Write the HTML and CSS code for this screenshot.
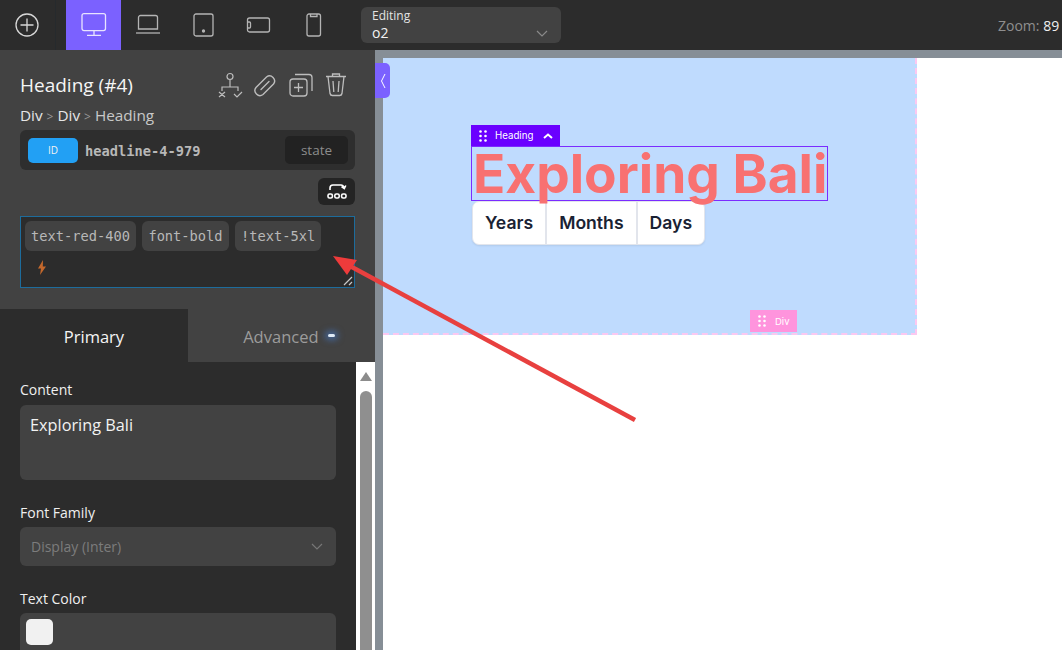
FILE: index.html
```html
<!DOCTYPE html>
<html lang="en">
<head>
    <meta charset="UTF-8">
    <title>Heading editor</title>
    <link rel="stylesheet" href="styles.css">
</head>
<body>
    <div class="topbar">
        <div class="add-btn">
            <svg width="26" height="26" viewBox="0 0 26 26" fill="none" stroke="#d8d8d8" stroke-width="1.3"><circle cx="13" cy="13" r="11"/><path d="M13 6.500v13M6.500 13h13"/></svg>
        </div>
        <div class="device active">
            <svg width="28" height="26" viewBox="0 0 28 26" fill="none" stroke="#e8e4ff" stroke-width="1.3"><rect x="2" y="1.600" width="23.500" height="17" rx="2"/><path d="M14 19v4M7 23.400h14"/></svg>
        </div>
        <div class="device">
            <svg width="28" height="26" viewBox="0 0 28 26" fill="none" stroke="#b4b4b4" stroke-width="1.3"><path d="M3.500 17V5.500a2 2 0 0 1 2-2h15a2 2 0 0 1 2 2V17z"/><path d="M1 21h24"/></svg>
        </div>
        <div class="device">
            <svg width="24" height="26" viewBox="0 0 24 26" fill="none" stroke="#b4b4b4" stroke-width="1.3"><rect x="2" y="2" width="19" height="22" rx="2"/><circle cx="11.500" cy="19" r="1" fill="#b4b4b4"/></svg>
        </div>
        <div class="device">
            <svg width="28" height="26" viewBox="0 0 28 26" fill="none" stroke="#b4b4b4" stroke-width="1.3"><rect x="2.500" y="6" width="22" height="14" rx="2"/><path d="M2.500 10h2a1 1 0 0 1 1 1v4a1 1 0 0 1-1 1h-2"/></svg>
        </div>
        <div class="device">
            <svg width="20" height="26" viewBox="0 0 20 26" fill="none" stroke="#b4b4b4" stroke-width="1.3"><rect x="3" y="2" width="13.500" height="22" rx="2"/><path d="M6.500 2v2.500H13V2"/></svg>
        </div>
        <div class="editing">
            <div class="editing-label">Editing</div>
            <div class="editing-value">o2</div>
            <svg class="editing-caret" width="12" height="7" viewBox="0 0 12 7" fill="none" stroke="#8a8a8a" stroke-width="1.2"><path d="M1 1l5 5 5-5"/></svg>
        </div>
        <div class="zoom"><span class="zoom-label">Zoom:</span> 89</div>
    </div>

    <div class="main">
        <div class="sidebar">
            <div class="panel">
                <div class="title-row">
                    <div class="title">Heading (#4)</div>
                    <div class="title-icons">
                        <svg class="icon-flow" width="26" height="26" viewBox="0 0 26 26" fill="none" stroke="#bdbdbd" stroke-width="1.2"><circle cx="12" cy="4.500" r="3"/><path d="M12 8v7M4 19v-4h16v4M1 20l6 5M7 20l-6 5M16 22l3 3 5-5"/></svg>
                        <svg width="24" height="24" viewBox="0 0 24 24" fill="none" stroke="#bdbdbd" stroke-width="1.4" stroke-linecap="round"><path d="M3 14.500L13.500 4a5 5 0 0 1 7 7L10 21.500a5 5 0 0 1-7-7z"/><path d="M8 16.500L16 8.500"/></svg>
                        <svg width="24" height="24" viewBox="0 0 24 24" fill="none" stroke="#bdbdbd" stroke-width="1.3"><rect x="1" y="6" width="17" height="17" rx="3"/><path d="M6 1.500h14a3 3 0 0 1 3 3V18M9.500 10v9M5 14.500h9"/></svg>
                        <svg width="22" height="24" viewBox="0 0 22 24" fill="none" stroke="#bdbdbd" stroke-width="1.3"><path d="M1 3.500h20M7.500 3.500V1h7v2.500M3 3.500l2 17a2.500 2.500 0 0 0 2.500 2h7a2.500 2.500 0 0 0 2.500-2l2-17M8 8l.8 11M14 8l-.8 11"/></svg>
                    </div>
                </div>
                <div class="crumbs">Div <span class="sep">&gt;</span> Div <span class="sep">&gt;</span> <span class="crumb-last">Heading</span></div>
                <div class="id-row">
                    <div class="id-badge">ID</div>
                    <div class="id-value">headline-4-979</div>
                    <div class="state">state</div>
                </div>
                <div class="swap-row">
                    <div class="swap-btn">
                        <svg width="20" height="17" viewBox="0 0 20 17" fill="none" stroke="#fff" stroke-width="1.6"><path d="M3 7V5a3 3 0 0 1 3-3h8c1.500 0 2.500 1 3 2.500M14.500 3.500l2.800 2 1.500-3"/><rect x="1" y="11" width="4.400" height="4" rx="1.500"/><rect x="7.800" y="11" width="4.400" height="4" rx="1.500"/><rect x="14.600" y="11" width="4.400" height="4" rx="1.500"/></svg>
                    </div>
                </div>
                <div class="class-box">
                    <div class="chips">
                        <span class="chip">text-red-400</span>
                        <span class="chip">font-bold</span>
                        <span class="chip">!text-5xl</span>
                    </div>
                    <svg class="bolt" width="10" height="15" viewBox="0 0 10 15"><path d="M6 0L1 8.500h3L3 15l6-8.500H5.800z" fill="#c4682c"/></svg>
                    <svg class="grip" width="10" height="10" viewBox="0 0 10 10" stroke="#c8c8c8" stroke-width="1.2"><path d="M1 9l8-8M6 9l3-3"/></svg>
                </div>
            </div>

            <div class="tabs">
                <div class="tab tab-on">Primary</div>
                <div class="tab">Advanced <span class="pill"></span></div>
            </div>

            <div class="props">
                <div class="props-body">
                    <label class="prop-label">Content</label>
                    <div class="textarea">Exploring Bali</div>
                    <label class="prop-label">Font Family</label>
                    <div class="select">
                        <span>Display (Inter)</span>
                        <svg width="12" height="7" viewBox="0 0 12 7" fill="none" stroke="#777" stroke-width="1.2"><path d="M1 1l5 5 5-5"/></svg>
                    </div>
                    <label class="prop-label">Text Color</label>
                    <div class="color-field"><span class="swatch"></span></div>
                </div>
                <div class="scrollbar">
                    <div class="scroll-up"></div>
                    <div class="scroll-thumb"></div>
                </div>
            </div>
        </div>

        <div class="divider"></div>

        <div class="canvas-wrap">
            <div class="collapse">
                <svg width="6" height="16" viewBox="0 0 6 16" fill="none" stroke="#fff" stroke-width="1"><path d="M5 1L1.500 8 5 15"/></svg>
            </div>
            <div class="canvas">
                <div class="blue-block">
                    <div class="heading-wrap">
                        <div class="heading-tag">
                            <svg width="8" height="12" viewBox="0 0 8 12" fill="#fff"><circle cx="1.500" cy="1.500" r="1.300"/><circle cx="6.500" cy="1.500" r="1.300"/><circle cx="1.500" cy="6" r="1.300"/><circle cx="6.500" cy="6" r="1.300"/><circle cx="1.500" cy="10.500" r="1.300"/><circle cx="6.500" cy="10.500" r="1.300"/></svg>
                            <span>Heading</span>
                            <svg class="tag-caret" width="10" height="6" viewBox="0 0 10 6" fill="none" stroke="#fff" stroke-width="2"><path d="M1 5l4-3.500L9 5"/></svg>
                        </div>
                        <h1 class="heading">Exploring Bali</h1>
                    </div>
                    <div class="segments">
                        <div class="segment">Years</div>
                        <div class="segment">Months</div>
                        <div class="segment">Days</div>
                    </div>
                    <div class="div-tag">
                        <svg width="8" height="12" viewBox="0 0 8 12" fill="#fff"><circle cx="1.500" cy="1.500" r="1.300"/><circle cx="6.500" cy="1.500" r="1.300"/><circle cx="1.500" cy="6" r="1.300"/><circle cx="6.500" cy="6" r="1.300"/><circle cx="1.500" cy="10.500" r="1.300"/><circle cx="6.500" cy="10.500" r="1.300"/></svg>
                        <span>Div</span>
                    </div>
                </div>
            </div>
        </div>
    </div>

    <svg class="arrow" width="1062" height="650" viewBox="0 0 1062 650">
        <path d="M635 420L350 266" stroke="#e8403f" stroke-width="4.500" fill="none"/>
        <path d="M333 256L357 260L347 275z" fill="#ee3b3b"/>
    </svg>
</body>
</html>
```

FILE: styles.css
```css
* {
    box-sizing: border-box;
}
html, body {
    height: 100%;
}
body {
    margin: 0;
    height: 650px;
    overflow: hidden;
    font-family: "Open Sans", "Noto Sans", sans-serif;
    background-color: #fff;
    color: #f2f2f2;
    position: relative;
}

/* top bar */
.topbar {
    height: 50px;
    background-color: #2c2c2c;
    display: flex;
    align-items: center;
    overflow: hidden;
    white-space: nowrap;
}
.add-btn {
    width: 56px;
    height: 50px;
    flex: none;
    margin-right: 10px;
    border-right: 1px solid #262a2d;
    display: flex;
    align-items: center;
    justify-content: center;
    padding-right: 1px;
}
.device {
    width: 55px;
    height: 50px;
    flex: none;
    display: flex;
    align-items: center;
    justify-content: center;
}
.device.active {
    background-color: #7b61ff;
}
.editing {
    position: relative;
    width: 200px;
    height: 36px;
    margin-left: 20px;
    flex: none;
    background-color: #424242;
    border-radius: 6px;
    padding: 1px 11px;
}
.editing-label {
    font-size: 12px;
    line-height: 15px;
    color: #e4e4e4;
}
.editing-value {
    font-size: 14px;
    line-height: 20px;
}
.editing-caret {
    position: absolute;
    right: 13px;
    top: 23px;
}
.zoom {
    margin-left: auto;
    font-size: 14px;
    color: #f0f0f0;
    flex: none;
    width: 64px;
}
.zoom-label {
    color: #8f8f8f;
}

/* left panel */
.main {
    display: flex;
    height: 600px;
}
.sidebar {
    width: 375px;
    flex: none;
    display: flex;
    flex-direction: column;
    background-color: #2c2c2c;
}
.panel {
    height: 259px;
    background-color: #424242;
    padding: 18px 20px 0;
}
.title-row {
    display: flex;
    justify-content: space-between;
    align-items: center;
    height: 34px;
}
.title {
    font-size: 19px;
    line-height: 28px;
    color: #f5f5f5;
}
.title-icons {
    display: flex;
    align-items: center;
    gap: 12px;
    margin-right: 8px;
}
.icon-flow {
    margin-right: -3px;
}
.crumbs {
    margin-top: 3px;
    height: 21px;
    font-size: 15.300px;
    line-height: 20px;
    color: #e6e6e6;
}
.sep {
    color: #989898;
    font-size: 12px;
}
.crumb-last {
    color: #c8c8c8;
}
.id-row {
    margin-top: 4px;
    width: 335px;
    height: 40px;
    background-color: #2e2e2e;
    border-radius: 6px;
    padding: 0 7px 0 8px;
    display: flex;
    align-items: center;
}
.id-badge {
    width: 50px;
    height: 25px;
    background-color: #22a0f4;
    border-radius: 5px;
    font-size: 10px;
    line-height: 25px;
    text-align: center;
    color: #f2f2f2;
}
.id-value {
    margin-left: 7px;
    padding-top: 1px;
    font-family: "DejaVu Sans Mono", monospace;
    font-size: 13.700px;
    font-weight: 700;
    color: #b8b8b8;
}
.state {
    margin-left: auto;
    width: 63px;
    height: 28px;
    background-color: #222;
    border-radius: 5px;
    font-size: 13.500px;
    line-height: 28px;
    text-align: center;
    color: #8c8c8c;
}
.swap-row {
    display: flex;
    justify-content: flex-end;
    width: 335px;
    margin-top: 8px;
}
.swap-btn {
    width: 37px;
    height: 27px;
    background-color: #242424;
    border-radius: 6px;
    display: flex;
    align-items: center;
    justify-content: center;
}
.class-box {
    position: relative;
    width: 335px;
    height: 72px;
    margin-top: 11px;
    background-color: #2c2c2c;
    border: 1px solid #1d6c9c;
    padding: 4px;
}
.chips {
    display: flex;
    gap: 6.500px;
}
.chip {
    height: 30px;
    padding: 0 6px;
    background-color: #424242;
    border-radius: 6px;
    font-family: "DejaVu Sans Mono", monospace;
    font-size: 13.700px;
    line-height: 31px;
    color: #b8b8b8;
    white-space: nowrap;
}
.bolt {
    position: absolute;
    left: 16px;
    top: 43px;
}
.grip {
    position: absolute;
    right: 1px;
    bottom: 1px;
}

/* tabs */
.tabs {
    height: 53px;
    display: flex;
    background-color: #424242;
}
.tab {
    width: 188px;
    font-size: 16.500px;
    line-height: 55px;
    text-align: center;
    color: #9c9c9c;
    flex: none;
}
.tab + .tab {
    width: 187px;
    padding-left: 15px;
}
.tab-on {
    background-color: #2c2c2c;
    color: #f5f5f5;
}
.pill {
    display: inline-block;
    width: 7px;
    height: 3px;
    margin-left: 5px;
    border-radius: 2px;
    vertical-align: 6px;
    background-color: #dfeaf5;
    box-shadow: 0 0 6px 3px rgba(70, 130, 220, 0.55);
}

/* properties */
.props {
    flex: 1;
    display: flex;
    overflow: hidden;
}
.props-body {
    width: 356px;
    flex: none;
    padding: 18px 20px 0;
}
.prop-label {
    display: block;
    font-size: 14px;
    line-height: 19px;
    color: #f0f0f0;
}
.textarea {
    margin-top: 6px;
    margin-bottom: 23px;
    height: 75px;
    background-color: #424242;
    border-radius: 6px;
    padding: 8px 10px;
    font-size: 16.300px;
    line-height: 24px;
    color: #f2f2f2;
}
.select {
    margin-top: 5px;
    margin-bottom: 23px;
    height: 39px;
    background-color: #424242;
    border-radius: 6px;
    padding: 0 13px 0 11px;
    display: flex;
    align-items: center;
    justify-content: space-between;
    font-size: 14px;
    color: #7c7c7c;
}
.color-field {
    margin-top: 5px;
    height: 50px;
    background-color: #424242;
    border-radius: 6px;
    padding: 6px;
}
.swatch {
    display: block;
    width: 27px;
    height: 26px;
    background-color: #f1f1f1;
    border-radius: 5px;
}
.scrollbar {
    flex: 1;
    background-color: #fff;
    padding: 10px 4px 0;
}
.scroll-up {
    width: 0;
    margin: 0 auto;
    border-left: 6.500px solid transparent;
    border-right: 6.500px solid transparent;
    border-bottom: 9px solid #8c8c8c;
}
.scroll-thumb {
    margin-top: 10px;
    height: 300px;
    background-color: #8f8f8f;
    border-radius: 6px 6px 0 0;
}

/* canvas */
.divider {
    width: 8px;
    flex: none;
    background-color: #868e96;
}
.canvas-wrap {
    flex: 1;
    position: relative;
    background-color: #fff;
    padding-top: 8px;
}
.canvas-wrap::before {
    content: "";
    display: block;
    position: absolute;
    left: 0;
    right: 0;
    top: 0;
    height: 8px;
    background-color: #868e96;
}
.collapse {
    position: absolute;
    z-index: 1;
    left: -8px;
    top: 13px;
    width: 15px;
    height: 35px;
    background-color: #7b61ff;
    border-radius: 0 5px 5px 0;
    display: flex;
    align-items: center;
    justify-content: center;
}
.blue-block {
    position: relative;
    width: 534px;
    height: 277px;
    background-color: #bfdbfe;
    border-right: 2px dashed #fbc8f0;
    border-bottom: 2px dashed #fbc8f0;
    padding: 88px 0 0 88px;
}
.heading-wrap {
    position: relative;
    width: 357px;
}
.heading-tag {
    position: absolute;
    left: 0;
    top: -21px;
    width: 89px;
    height: 21px;
    background-color: #6a00ff;
    display: flex;
    align-items: center;
    padding-left: 8px;
    gap: 8px;
    font-family: "Inter", sans-serif;
    font-size: 9.700px;
    color: #fff;
}
.tag-caret {
    margin-left: 2px;
}
.heading {
    margin: 0;
    height: 55px;
    border: 1px solid #7b2cff;
    font-family: "Inter", sans-serif;
    font-size: 53.200px;
    font-weight: 700;
    line-height: 53px;
    color: #f87171;
    white-space: nowrap;
    padding-left: 1px;
}
.segments {
    display: inline-flex;
    margin-left: 1px;
    background-color: #fff;
    border: 1px solid #e2e5ec;
    border-radius: 7px;
    height: 44px;
    box-shadow: 0 1px 2px rgba(0, 0, 0, 0.08);
}
.segment {
    padding: 0 12px;
    font-family: "Inter", sans-serif;
    font-size: 17.600px;
    font-weight: 600;
    line-height: 42px;
    color: #1a2233;
}
.segment + .segment {
    border-left: 2px solid #e2e5ec;
}
.div-tag {
    position: absolute;
    left: 367px;
    bottom: 1px;
    width: 47px;
    height: 22px;
    background-color: #ff94dd;
    display: flex;
    align-items: center;
    padding-left: 8px;
    gap: 9px;
    font-family: "Inter", sans-serif;
    font-size: 9.500px;
    color: #fff;
}

/* annotation */
.arrow {
    position: absolute;
    left: 0;
    top: 0;
    pointer-events: none;
}
```
